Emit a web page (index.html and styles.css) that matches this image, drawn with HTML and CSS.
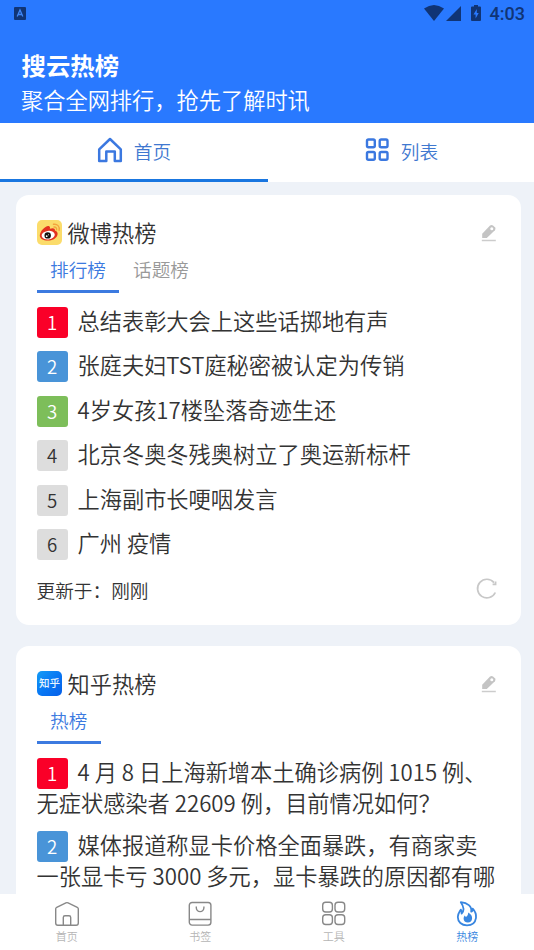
FILE: index.html
```html
<!DOCTYPE html>
<html lang="zh-CN">
<head>
<meta charset="utf-8">
<title>搜云热榜</title>
<link rel="stylesheet" href="styles.css">
</head>
<body>
<div class="app">
  <header class="header">
    <div class="status">
      <svg class="status-app" viewBox="0 0 12 13"><rect width="12" height="13" rx="1" fill="#103475"/><path d="M3.2 9.5 6 3l2.8 6.5M4.2 7.5h3.6" fill="none" stroke="#3f86f5" stroke-width="1.3"/></svg>
      <div class="status-right">
        <svg class="wifi" viewBox="0 0 20 16"><path d="M0 3.5Q10-3.500 20 3.500L10 16Z"/></svg>
        <svg class="signal" viewBox="0 0 15 15"><path d="M15 0V15H0Z"/></svg>
        <svg class="battery" viewBox="0 0 10 16"><path d="M3 0h4v1.500h2q1 0 1 1V15q0 1-1 1H1q-1 0-1-1V2.500q0-1 1-1h2Z"/><path d="M5.800 4 2.500 9.500H4.600V13.500L7.700 8H5.800Z" fill="#2979ff"/></svg>
        <span class="clock">4:03</span>
      </div>
    </div>
    <h1>搜云热榜</h1>
    <p>聚合全网排行，抢先了解时讯</p>
  </header>
  <nav class="tabs">
    <div class="tab active">
      <svg class="tab-icon" viewBox="0 0 26 26" fill="none" stroke="#3b78e0" stroke-width="2.500" stroke-linejoin="round"><path d="M2.200 12.300 13 2l10.800 10.300V24h-6V14.500h-8.500V24H2.200Z"/></svg>
      <span>首页</span>
    </div>
    <div class="tab">
      <svg class="tab-icon" viewBox="0 0 26 26" fill="none" stroke="#3b78e0" stroke-width="2.400"><rect x="3" y="2.500" width="7.800" height="7.800" rx="1.500"/><rect x="15.700" y="2.500" width="7.800" height="7.800" rx="1.500"/><rect x="3" y="15" width="7.800" height="7.800" rx="1.500"/><rect x="15.700" y="15" width="7.800" height="7.800" rx="1.500"/></svg>
      <span>列表</span>
    </div>
  </nav>
  <main class="content">
    <section class="card">
      <div class="card-head">
        <svg class="logo" viewBox="0 0 25 25"><rect width="25" height="25" rx="5" fill="#fbdc6b"/><path d="M2.800 15.500C3 11 8.500 5.500 11.600 6c1.600.3 1.600 1.700 1.200 2.800 2.500-1.100 5.400-1 5.200 1.800 2.200.7 3 2.500 2.500 4.200-1 4-5.400 5.800-9.700 5.800-4.600 0-8-2-8-5.100Z" fill="#e3321f"/><ellipse cx="11.200" cy="15.200" rx="6.600" ry="4.300" fill="#fff" transform="rotate(-8 11.200 15.200)"/><circle cx="10.700" cy="15.400" r="3.200" fill="#16110f"/><circle cx="9.700" cy="16.200" r=".9" fill="#fff"/><circle cx="11.500" cy="14.700" r=".5" fill="#fff"/><path d="M16.500 4.300c3.800-.7 6.500 2.200 5.600 6M17 7c1.800-.2 3 1 2.600 2.800" fill="none" stroke="#f3a43d" stroke-width="1.400" stroke-linecap="round"/></svg>
        <h2>微博热榜</h2>
        <svg class="edit" viewBox="0 0 16 18"><path d="M1.200 14V9.800L8.800 1.800q1.600-1.500 3.200-.2l1.900 1.700q1.300 1.300 0 2.900L5.800 14Z" fill="#c4c4c4"/><circle cx="10.800" cy="4.700" r="1.500" fill="#fff"/><path d="M.8 16.500h14" stroke="#ccc" stroke-width="1.500"/></svg>
      </div>
      <div class="subtabs"><span class="subtab on">排行榜</span><span class="subtab">话题榜</span></div>
      <ol class="list">
        <li><span class="rank r1">1</span>总结表彰大会上这些话掷地有声</li>
        <li><span class="rank r2">2</span>张庭夫妇TST庭秘密被认定为传销</li>
        <li><span class="rank r3">3</span>4岁女孩17楼坠落奇迹生还</li>
        <li><span class="rank">4</span>北京冬奥冬残奥树立了奥运新标杆</li>
        <li><span class="rank">5</span>上海副市长哽咽发言</li>
        <li><span class="rank">6</span>广州 疫情</li>
      </ol>
      <div class="card-foot">
        <span>更新于：刚刚</span>
        <svg class="refresh" viewBox="0 0 21 22" fill="none" stroke="#c8c8c8" stroke-width="1.700"><path d="M18 4.600A9.300 9.300 0 1 0 19.300 14.500M19.600 3.500v2.800h-3"/></svg>
      </div>
    </section>
    <section class="card long">
      <div class="card-head">
        <svg class="logo" viewBox="0 0 25 25"><defs><linearGradient id="z" x2="1" y2="1"><stop stop-color="#159cf5"/><stop offset=".5" stop-color="#0878f4"/><stop offset="1" stop-color="#075fe8"/></linearGradient></defs><rect width="25" height="25" rx="5" fill="url(#z)"/><text x="12.500" y="16.200" text-anchor="middle" font-size="10.500" font-weight="500" fill="#e8f5ff">知乎</text></svg>
        <h2>知乎热榜</h2>
        <svg class="edit" viewBox="0 0 16 18"><path d="M1.200 14V9.800L8.800 1.800q1.600-1.500 3.200-.2l1.900 1.700q1.300 1.300 0 2.900L5.800 14Z" fill="#c4c4c4"/><circle cx="10.800" cy="4.700" r="1.500" fill="#fff"/><path d="M.8 16.500h14" stroke="#ccc" stroke-width="1.500"/></svg>
      </div>
      <div class="subtabs"><span class="subtab on">热榜</span></div>
      <ol class="list">
        <li><span class="rank r1">1</span>4 月 8 日上海新增本土确诊病例 1015 例、<br>无症状感染者 22609 例，目前情况如何？</li>
        <li><span class="rank r2">2</span>媒体报道称显卡价格全面暴跌，有商家卖<br>一张显卡亏 3000 多元，显卡暴跌的原因都有哪</li>
      </ol>
    </section>
  </main>
  <nav class="bottom">
    <div class="item"><svg viewBox="0 0 26 26"><path d="M1.700 22V7.800q0-1 1-1.500l9.200-4.400q1.100-.5 2.200 0l9.200 4.400q1 .5 1 1.500V22q0 2.200-2.200 2.200H3.900Q1.700 24.200 1.700 22ZM9.300 24V16.500q0-1.700 1.700-1.700h4q1.700 0 1.700 1.700V24"/></svg><span>首页</span></div>
    <div class="item"><svg viewBox="0 0 26 26"><rect x="2.300" y="1.500" width="21.600" height="22.600" rx="2.800"/><path d="M2.300 18.500h21.600M9.300 5.500v1.300a3.800 3.800 0 0 0 7.600 0V5.500"/></svg><span>书签</span></div>
    <div class="item"><svg viewBox="0 0 26 26"><rect x="1.700" y="1.300" width="9.700" height="9.700" rx="3"/><rect x="14" y="1.300" width="9.700" height="9.700" rx="3"/><rect x="1.700" y="13.800" width="9.700" height="9.700" rx="3"/><rect x="14" y="13.800" width="9.700" height="9.700" rx="3"/></svg><span>工具</span></div>
    <div class="item on"><svg viewBox="0 0 26 26"><path d="M6.800 1.200c6.700.6 11.300 4 10.400 9.500 1.200-.5 1.700-1.600 1.500-3.100 2.800 3 3.700 6.100 3.300 9.200-.7 4.700-4.200 7.500-9 7.500-5.500 0-9.200-3.500-9.200-8.200 0-3.500 1.800-5.300 3-7.500.7 1 .9 2.200.8 3.900C10.500 9.500 9.300 4.800 6.800 1.200Z"/><path class="solid" d="M14.200 11.500c3.300 2.300 4.100 3.800 3.900 6-.2 2.500-1.800 4-4.200 4-2.600 0-4.300-1.600-4.300-4 0-1.200.4-2.100 1.100-3l1.200 1.500c1.500-.9 2.300-2.500 2.300-4.500Z"/></svg><span>热榜</span></div>
  </nav>
</div>
</body>
</html>
```
FILE: styles.css
```css
* { box-sizing: border-box; margin: 0; padding: 0; }
body {
  font-family: "Noto Sans CJK SC", sans-serif;
  font-weight: 350;
  color: #333;
  background: #eef2f8;
}
svg { display: block; flex: none; }
.app { height: 950px; display: flex; flex-direction: column; overflow: hidden; }
.header { height: 122.500px; flex: none; background: #2979ff; color: #fff; }
.status {
  height: 28px;
  padding: 0 9px 0 14px;
  display: flex;
  align-items: center;
  justify-content: space-between;
}
.status-app { width: 12px; height: 13px; margin-top: -1px; }
.status-right { display: flex; align-items: center; fill: #103475; color: #103475; }
.wifi { width: 20px; height: 16px; margin: -2px 2px 0 0; }
.signal { width: 15px; height: 15px; margin: -2px 10px 0 0; }
.battery { width: 10px; height: 16px; margin: -2px 9px 0 0; }
.clock { font: 500 18px/28px Roboto, sans-serif; }
.header h1 { font-size: 24.400px; line-height: 36px; font-weight: 700; padding-left: 21.500px; margin-top: 19px; }
.header p { font-size: 22.220px; line-height: 32px; padding-left: 21px; }
.tabs { height: 59.500px; flex: none; display: flex; background: #fff; }
.tab {
  flex: 1;
  display: flex;
  justify-content: center;
  align-items: center;
  gap: 11px;
  font-size: 18.670px;
  color: #3f78d0;
  border-bottom: 3.500px solid transparent;
}
.tab.active { flex: 0 0 268px; border-bottom-color: #1976e0; }
.tab-icon { width: 26px; height: 26px; margin-top: -1px; }
.content {
  flex: 1;
  min-height: 0;
  overflow: hidden;
  padding: 13px 13.500px 0 15.500px;
  display: flex;
  flex-direction: column;
  gap: 21px;
}
.card {
  flex: none;
  height: 430px;
  background: #fff;
  border-radius: 13px;
  padding: 22px 21.500px 0 21px;
}
.card-head { display: flex; align-items: center; height: 31px; }
.logo { width: 25px; height: 25px; }
.card-head h2 { flex: 1; font-size: 22.220px; font-weight: 350; margin-left: 6px; line-height: 31px; }
.edit { width: 16px; height: 18px; margin-right: 2px; }
.subtabs { display: flex; height: 45px; }
.subtab {
  font-size: 18.670px;
  line-height: 42px;
  padding: 0 13.500px;
  color: #999;
  border-bottom: 3px solid transparent;
}
.subtab.on { color: #3c7ae0; border-bottom-color: #3c7ae0; }
.list { list-style: none; margin-top: 11.500px; display: grid; gap: 13.500px; }
.list li { font-size: 22.220px; line-height: 31px; white-space: nowrap; }
.long .list { gap: 11.500px; }
.rank {
  display: inline-block;
  vertical-align: top;
  width: 31px;
  height: 31px;
  margin: 2px 10px -2px 0;
  border-radius: 3px;
  background: #ddd;
  font-size: 18.670px;
  line-height: 29px;
  text-align: center;
}
.r1 { background: #fa0028; color: #fff; }
.r2 { background: #4994d8; color: #fff; }
.r3 { background: #7dbe5a; color: #fff; }
.card-foot {
  display: flex;
  align-items: center;
  justify-content: space-between;
  height: 32px;
  margin-top: 15px;
  font-size: 18.670px;
}
.refresh { width: 21px; height: 22px; margin-right: 2.500px; }
.bottom {
  flex: none;
  height: 56px;
  background: #fff;
  display: grid;
  grid-template-columns: repeat(4, 1fr);
}
.item {
  display: flex;
  flex-direction: column;
  align-items: center;
  padding-top: 7px;
  font-size: 11px;
  line-height: 16px;
  color: #b5b5b5;
}
.item svg { width: 26px; height: 26px; margin-bottom: 1px; fill: none; stroke: #888; stroke-width: 1.400; stroke-linejoin: round; }
.item.on { color: #3886e0; }
.item.on svg { stroke: #3886e0; stroke-width: 1.800; }
.item.on .solid { fill: #3886e0; stroke: none; }
```
